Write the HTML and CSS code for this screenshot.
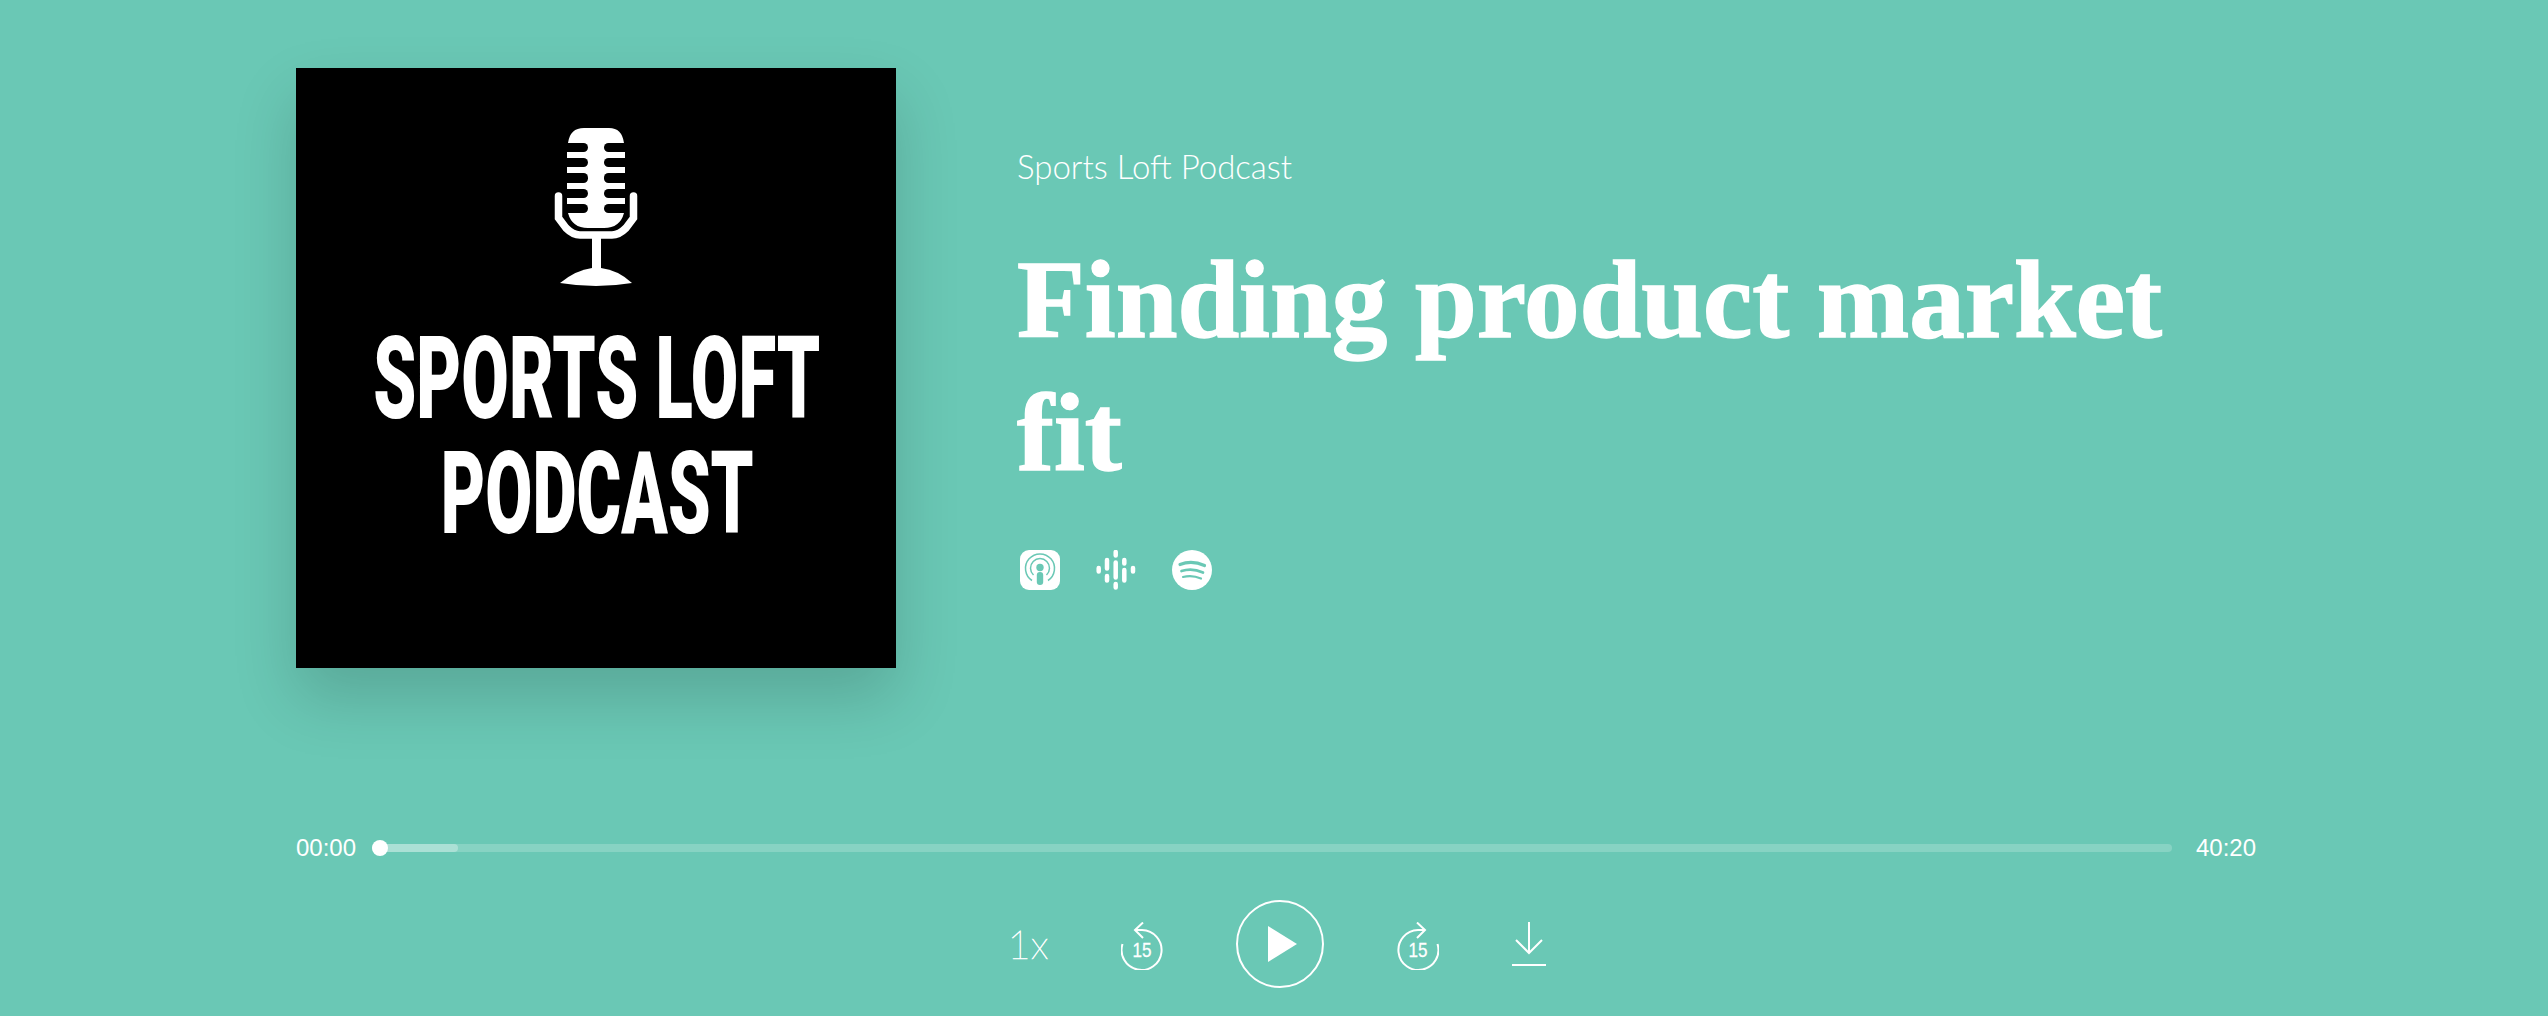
FILE: index.html
```html
<!DOCTYPE html>
<html lang="en">
<head>
<meta charset="utf-8">
<title>Finding product market fit</title>
<link rel="stylesheet" href="styles.css">
</head>
<body>
<main class="player">
  <section class="episode">
    <svg class="art" viewBox="0 0 600 600" role="img" aria-label="Sports Loft Podcast artwork">
      <rect class="art-bg" width="600" height="600"/>
      <path class="w" d="M272 75Q274 60 288 60H313Q326 60 328 75H329V145H328Q324 160 308 160H292Q276 160 272 145H271V75Z"/>
      <g class="k">
        <rect x="260" y="75" width="32" height="9" rx="4.5"/><rect x="260" y="90" width="32" height="9" rx="4.5"/>
        <rect x="260" y="105" width="32" height="10" rx="4.5"/><rect x="260" y="121" width="32" height="9" rx="4.5"/>
        <rect x="260" y="136" width="32" height="9" rx="4.5"/>
        <rect x="308" y="75" width="32" height="9" rx="4.5"/><rect x="308" y="90" width="32" height="9" rx="4.5"/>
        <rect x="308" y="105" width="32" height="10" rx="4.5"/><rect x="308" y="121" width="32" height="9" rx="4.5"/>
        <rect x="308" y="136" width="32" height="9" rx="4.5"/>
      </g>
      <path class="cradle" d="M262.500 128V150L270 160Q277 167 284 167H316Q323 167 330 160L337.500 150V128"/>
      <rect class="w" x="296" y="168" width="9" height="34"/>
      <path class="w" d="M264 215Q280 202 296 200H305Q322 202 336 215Q300 221 264 215Z"/>
      <g transform="scale(.58 1)"><text class="art-text" x="133" y="350" textLength="771" lengthAdjust="spacingAndGlyphs">SPORTS LOFT</text></g>
      <g transform="scale(.57 1)"><text class="art-text" x="254" y="465" textLength="549" lengthAdjust="spacingAndGlyphs">PODCAST</text></g>
    </svg>
    <div class="info">
      <p class="show">Sports Loft Podcast</p>
      <h1 class="title">Finding product market fit</h1>
      <ul class="links">
        <li>
          <svg class="link-icon" viewBox="0 0 40 40" aria-label="Apple Podcasts">
            <rect class="w" width="40" height="40" rx="9"/>
            <path class="ring r1" d="M12 30.500A14.500 14.500 0 1 1 28 30.500"/>
            <path class="ring r2" d="M13.500 25A9.500 9.500 0 1 1 26.500 25"/>
            <circle class="t" cx="20" cy="17.500" r="3.700"/>
            <rect class="t" x="16.800" y="22" width="6.400" height="13" rx="3"/>
          </svg>
        </li>
        <li>
          <svg class="link-icon" viewBox="0 0 40 40" aria-label="Google Podcasts">
            <g class="pills">
              <path d="M2.700 18V21.500M11 10V18.500M11 26V30.500M19.700 2V5.500M19.700 12.500V27.500M19.700 34V37.500M28.300 10V13.500M28.300 20V30.500M37 18V21.500"/>
            </g>
          </svg>
        </li>
        <li>
          <svg class="link-icon" viewBox="0 0 40 40" aria-label="Spotify">
            <circle class="w" cx="20" cy="20" r="20"/>
            <path class="sp s1" d="M8 14.500Q20 10 32.500 15.500"/>
            <path class="sp s2" d="M9.500 21Q20 17.500 31 22.500"/>
            <path class="sp s3" d="M11 27Q20 24.500 29 28.500"/>
          </svg>
        </li>
      </ul>
    </div>
  </section>

  <section class="timeline">
    <span class="time">00:00</span>
    <div class="track">
      <div class="buffer"></div>
      <div class="knob"></div>
    </div>
    <span class="time">40:20</span>
  </section>

  <section class="controls">
    <span class="speed">1x</span>
    <svg class="skip" viewBox="0 0 42 48" aria-label="Back 15 seconds">
      <path class="line" d="M1.500 22A20 20 0 1 0 21 8H14"/>
      <path class="line" d="M22 0.500L14 8L22 16"/>
      <text class="skip-text" x="11.500" y="35" textLength="19" lengthAdjust="spacingAndGlyphs">15</text>
    </svg>
    <button class="play" aria-label="Play">
      <svg class="play-icon" viewBox="0 0 29 36"><path class="w" d="M0 0L29 18L0 36Z"/></svg>
    </button>
    <svg class="skip" viewBox="0 0 42 48" aria-label="Forward 15 seconds">
      <path class="line" d="M40.500 22A20 20 0 1 1 21 8H28"/>
      <path class="line" d="M20 0.500L28 8L20 16"/>
      <text class="skip-text" x="11.500" y="35" textLength="19" lengthAdjust="spacingAndGlyphs">15</text>
    </svg>
    <svg class="download" viewBox="0 0 34 46" aria-label="Download">
      <path class="line" d="M17 1V32M4 19L17 32L30 19M0 44H34"/>
    </svg>
  </section>
</main>
</body>
</html>
```
FILE: styles.css
```css
* { box-sizing: border-box; }
html, body { margin: 0; height: 100%; }
body {
  background: #6ac8b5;
  color: #fff;
  overflow: hidden;
  font-family: "Liberation Sans", Arial, sans-serif;
}
.player {
  width: 1960px;
  margin-left: 296px;
  padding-top: 68px;
}
.episode {
  display: flex;
  gap: 121px;
  height: 600px;
}
.art {
  display: block;
  flex: none;
  width: 600px;
  height: 600px;
  box-shadow: 0 30px 60px rgba(0, 0, 0, .16);
}
.art-bg { fill: #000; }
.w { fill: #fff; }
.k { fill: #000; }
.t { fill: #6ac8b5; }
.cradle { fill: none; stroke: #fff; stroke-width: 7.500; stroke-linecap: round; }
.art-text {
  fill: #fff;
  font-family: Roboto, "Liberation Sans", sans-serif;
  font-weight: 900;
  font-size: 115px;
}
.info { flex: 1; min-width: 0; padding-top: 77px; }
.show {
  margin: 0;
  font-family: Lato, sans-serif;
  font-weight: 300;
  font-size: 33px;
  line-height: 42px;
}
.title {
  margin: 46px 0 0;
  font-family: "Liberation Serif", serif;
  font-weight: 700;
  font-size: 111px;
  line-height: 133px;
  -webkit-text-stroke: 1.500px #fff;
}
.links {
  display: flex;
  gap: 36px;
  list-style: none;
  margin: 51px 0 0;
  padding: 0 0 0 3px;
}
.links li { display: block; height: 40px; }
.link-icon { display: block; width: 40px; height: 40px; }
.ring { fill: none; stroke: #6ac8b5; stroke-width: 1.500; }
.pills path { fill: none; stroke: #fff; stroke-width: 4.500; stroke-linecap: round; }
.sp { fill: none; stroke: #6ac8b5; stroke-linecap: round; }
.s1 { stroke-width: 3.200; }
.s2 { stroke-width: 2.700; }
.s3 { stroke-width: 2.200; }
.timeline {
  display: flex;
  align-items: center;
  margin-top: 166px;
  height: 28px;
}
.time { font-size: 24px; line-height: 28px; flex: none; }
.track {
  position: relative;
  flex: 1;
  height: 8px;
  margin: 0 24px 0 16px;
  border-radius: 4px;
  background: rgba(255, 255, 255, .2);
}
.buffer {
  width: 86px;
  height: 8px;
  border-radius: 4px;
  background: rgba(255, 255, 255, .3);
}
.knob {
  position: absolute;
  left: 0;
  top: -4px;
  width: 16px;
  height: 16px;
  border-radius: 50%;
  background: #fff;
}
.controls {
  display: flex;
  align-items: center;
  justify-content: center;
  gap: 73px;
  margin-top: 38px;
  padding-left: 2px;
}
.speed {
  font-family: Lato, sans-serif;
  font-weight: 100;
  font-size: 40px;
  line-height: 48px;
  -webkit-text-stroke: .6px #fff;
}
.skip { display: block; width: 42px; height: 48px; margin-top: 4px; }
.line { fill: none; stroke: #fff; stroke-width: 2; }
.skip-text {
  fill: #fff;
  stroke: #fff;
  stroke-width: .3px;
  font-family: "Liberation Sans", sans-serif;
  font-size: 21px;
}
.play {
  display: flex;
  align-items: center;
  justify-content: center;
  width: 88px;
  height: 88px;
  padding: 0 0 0 5px;
  border: 2px solid #fff;
  border-radius: 50%;
  background: none;
}
.play-icon { display: block; width: 29px; height: 36px; }
.download { display: block; width: 34px; height: 46px; }
```
